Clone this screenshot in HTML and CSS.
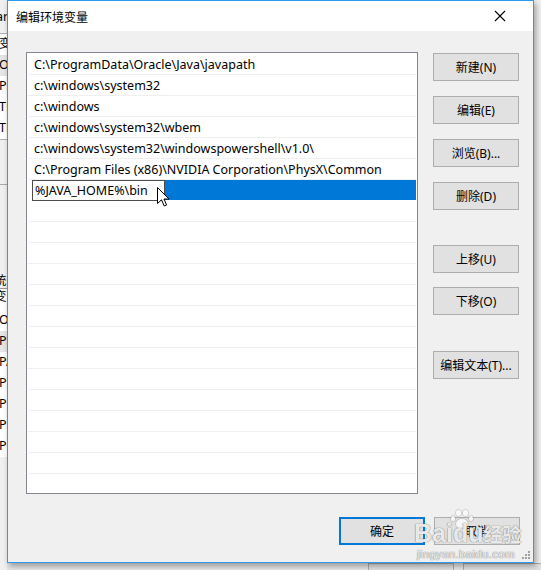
FILE: index.html
```html
<!DOCTYPE html>
<html lang="zh-CN">
<head>
<meta charset="utf-8">
<title>编辑环境变量</title>
<link rel="stylesheet" href="styles.css">
</head>
<body>
<div class="desktop">
  <div class="bg-left">
    <div class="bl-head">ar</div>
    <div class="bl-list">
      <div class="bl-row">变</div>
      <div class="bl-row sel">O</div>
      <div class="bl-row">Pa</div>
      <div class="bl-row">TE</div>
      <div class="bl-row">TM</div>
    </div>
    <div class="bl-gap"><div class="bl-gap-line"></div></div>
    <div class="bl-head2">统</div>
    <div class="bl-colhead">变</div>
    <div class="bl-list two">
      <div class="bl-row">O</div>
      <div class="bl-row sel">Pa</div>
      <div class="bl-row">PA</div>
      <div class="bl-row">PF</div>
      <div class="bl-row">PF</div>
      <div class="bl-row">PF</div>
      <div class="bl-row">PF</div>
    </div>
  </div>
  <div class="bg-right">
    <div class="br-a"></div>
    <div class="br-b"></div>
    <div class="br-c"></div>
    <div class="br-d"></div>
    <div class="br-e"></div>
    <div class="br-f"></div>
    <div class="br-g"></div>
    <div class="br-h"></div>
  </div>
  <div class="bg-bottom">
    <div class="bb-btn one"></div>
    <div class="bb-btn two"></div>
  </div>
</div>

<div class="dialog">
  <div class="titlebar">
    <span class="title">编辑环境变量</span>
    <svg class="close" width="12" height="12" viewBox="0 0 12 12"><path d="M1 1 L11 11 M11 1 L1 11" stroke="#000" stroke-width="1.1" fill="none"/></svg>
  </div>
  <div class="content">
    <div class="main">
      <div class="listbox">
        <div class="row"><span>C:\ProgramData\Oracle\Java\javapath</span></div>
        <div class="row"><span>c:\windows\system32</span></div>
        <div class="row"><span>c:\windows</span></div>
        <div class="row"><span>c:\windows\system32\wbem</span></div>
        <div class="row"><span>c:\windows\system32\windowspowershell\v1.0\</span></div>
        <div class="row"><span>C:\Program Files (x86)\NVIDIA Corporation\PhysX\Common</span></div>
        <div class="row editing"><span class="editbox">%JAVA_HOME%\bin</span><span class="selfill"></span></div>
        <div class="row"></div>
        <div class="row"></div>
        <div class="row"></div>
        <div class="row"></div>
        <div class="row"></div>
        <div class="row"></div>
        <div class="row"></div>
        <div class="row"></div>
        <div class="row"></div>
        <div class="row"></div>
        <div class="row"></div>
        <div class="row"></div>
        <div class="row"></div>
        <div class="row"></div>
      </div>
      <div class="buttons">
        <div class="btn b1">新建(N)</div>
        <div class="btn b2">编辑(E)</div>
        <div class="btn b3">浏览(B)...</div>
        <div class="btn b4">删除(D)</div>
        <div class="btn b5">上移(U)</div>
        <div class="btn b6">下移(O)</div>
        <div class="btn b7">编辑文本(T)...</div>
      </div>
    </div>
    <div class="footer">
      <div class="btn ok">确定</div>
      <div class="btn">取消</div>
    </div>
  </div>
  <div class="grip">
    <i></i><i></i><i></i><i></i><i></i><i></i>
  </div>
</div>

<div class="watermark">
  <div class="paw">
    <span class="toe t1"></span><span class="toe t2"></span><span class="toe t3"></span><span class="toe t4"></span><span class="pad"></span>
  </div>
  <div class="wm-main">Baidu<span class="wm-cn">经验</span></div>
  <div class="wm-url">jingyan.baidu.com</div>
</div>

<svg class="cursor" width="13" height="21" viewBox="0 0 13 21">
  <path d="M0.5 0.5 L0.5 16.5 L4.5 12.8 L7.2 19 L9.6 18 L7 12 L12 12 Z" fill="#fff" stroke="#000" stroke-width="1" stroke-linejoin="miter"/>
</svg>
</body>
</html>
```

FILE: styles.css
```css
* { box-sizing: border-box; }
html, body { margin: 0; padding: 0; }
body {
  width: 541px;
  height: 570px;
  overflow: hidden;
  position: relative;
  background: #f0f0f0;
  font-family: "Noto Sans", "Noto Sans CJK SC", sans-serif;
  font-size: 12px;
  color: #000;
}

/* ---------- backdrop window ---------- */
.desktop {
  width: 541px;
  height: 570px;
  display: grid;
  grid-template-columns: 7px 1fr 7px;
  grid-template-rows: 563px 7px;
}
.bg-left {
  grid-column: 1;
  grid-row: 1 / 3;
  overflow: hidden;
  background: #f0f0f0;
  font-family: "Noto Sans", "Noto Sans CJK SC", sans-serif;
  font-size: 12.5px;
  white-space: nowrap;
}
.bl-head { height: 33px; padding-top: 8px; line-height: 18px; margin-left: -4px; }
.bl-list { background: #fff; border-top: 1px solid #b0b0b0; }
.bl-list.two { border-top: none; }
.bl-row { height: 21px; line-height: 20px; margin-left: -1px; }
.bl-row.sel { background: #e5e5e5; }
.bl-gap { height: 110px; background: #f0f0f0; border-top: 1px solid #b0b0b0; padding-top: 44px; }
.bl-gap-line { border-top: 1px solid #a8a8a8; }
.bl-head2 { height: 40px; line-height: 18px; padding-top: 23px; margin-left: -6px; border-bottom: 1px solid #9a9a9a; }
.bl-colhead { height: 21px; line-height: 16px; margin-left: -6px; background: #fff; }
.bg-right {
  grid-column: 3;
  grid-row: 1 / 3;
  background: #e8e8e8;
  display: flex;
  flex-direction: column;
}
.br-a { height: 33px; border-bottom: 1px solid #aaa; background: #f0f0f0; }
.br-b { height: 161px; border-bottom: 1px solid #aaa; background: #e6e6e6; }
.br-c { height: 15px; border-bottom: 1px solid #aaa; background: #e6e6e6; }
.br-d { height: 25px; border-bottom: 1px solid #aaa; background: #e6e6e6; }
.br-e { height: 50px; border-bottom: 1px solid #aaa; background: #e6e6e6; }
.br-f { height: 50px; background: #e6e6e6; }
.br-g { height: 52px; background: #c8c8c8; }
.br-h { flex: 1; background: #e6e6e6; }
.bg-bottom {
  grid-column: 2;
  grid-row: 2;
  display: flex;
  background: #e6e6e6;
}
.bb-btn { height: 7px; border: 1px solid #adadad; border-bottom: none; background: #e1e1e1; }
.bb-btn.one { margin-left: 361px; width: 86px; }
.bb-btn.two { margin-left: 9px; width: 86px; }

/* ---------- dialog ---------- */
.dialog {
  position: absolute;
  left: 7px;
  top: 0;
  width: 527px;
  height: 563px;
  border: 1px solid #2b9af3;
  background: #f0f0f0;
  box-shadow: 2px 3px 6px rgba(0,0,0,0.35);
  display: flex;
  flex-direction: column;
}
.titlebar {
  height: 30px;
  background: #fff;
  display: flex;
  align-items: center;
  justify-content: space-between;
  padding: 0 27px 0 8px;
}
.title {
  font-family: "Noto Sans CJK SC", sans-serif;
  font-size: 12px;
  padding-top: 1px;
}
.close { display: block; }

.content {
  flex: 1;
  padding: 21px 13px 0 18px;
  display: flex;
  flex-direction: column;
}
.main { display: flex; gap: 15px; }
.listbox {
  width: 392px;
  height: 442px;
  border: 1px solid #828790;
  background: #fff;
  overflow: hidden;
  padding: 1px 1px 0 1px;
}
.row {
  height: 21px;
  border-bottom: 1px solid #efefef;
  display: flex;
  align-items: center;
  padding-left: 6px;
  padding-top: 1px;
  white-space: nowrap;
  font-size: 12.5px;
}
.row span { line-height: 20px; }
.row.editing {
  padding-left: 4px;
  padding-top: 0;
  border-bottom: none;
  align-items: stretch;
}
.editbox {
  width: 133px;
  height: 21px;
  border: 1px solid #4c4c4c;
  background: #fff;
  padding-left: 2px;
  line-height: 19px !important;
}
.selfill { flex: 1; background: #0078d7; height: 20px; }

.buttons {
  width: 86px;
  display: flex;
  flex-direction: column;
  padding-top: 1px;
}
.btn {
  width: 86px;
  height: 28px;
  border: 1px solid #adadad;
  background: #e1e1e1;
  display: flex;
  align-items: center;
  justify-content: center;
  font-family: "Noto Sans", "Noto Sans CJK SC", sans-serif;
  font-size: 12px;
  color: #000;
}
.buttons .btn + .btn { margin-top: 15px; }
.buttons .b5 { margin-top: 35px !important; }
.buttons .b6 { margin-top: 14px !important; }
.buttons .b7 { margin-top: 36px !important; }

.footer {
  display: flex;
  justify-content: flex-end;
  gap: 9px;
  margin-top: 23px;
}
.btn.ok { border: 2px solid #0078d7; }

.grip {
  position: absolute;
  right: 3px;
  bottom: 3px;
  width: 9px;
  height: 9px;
}
.grip i {
  position: absolute;
  width: 2px;
  height: 2px;
  background: #a0a0a0;
}
.grip i:nth-child(1) { right: 0; bottom: 0; }
.grip i:nth-child(2) { right: 3px; bottom: 0; }
.grip i:nth-child(3) { right: 6px; bottom: 0; }
.grip i:nth-child(4) { right: 0; bottom: 3px; }
.grip i:nth-child(5) { right: 3px; bottom: 3px; }
.grip i:nth-child(6) { right: 0; bottom: 6px; }

/* ---------- watermark (overlay) ---------- */
.watermark {
  position: absolute;
  left: 414px;
  top: 503px;
  width: 110px;
  height: 58px;
  pointer-events: none;
  color: rgba(250,250,250,0.9);
  text-shadow: 0 0 1px rgba(100,100,100,0.7), 0 0 1px rgba(100,100,100,0.7);
}
.paw { position: absolute; left: 37px; top: 7px; width: 22px; height: 19px; }
.toe, .pad {
  position: absolute;
  background: rgba(250,250,250,0.9);
  border-radius: 50%;
  box-shadow: 0 0 1px 0.5px rgba(110,110,110,0.5);
}
.t1 { left: 0; top: 6px; width: 4px; height: 5px; }
.t2 { left: 5px; top: 0; width: 5px; height: 6px; }
.t3 { left: 12px; top: 0; width: 5px; height: 6px; }
.t4 { left: 18px; top: 6px; width: 4px; height: 5px; }
.pad { left: 5px; top: 9px; width: 12px; height: 10px; }
.wm-main {
  position: absolute;
  left: 0;
  top: 16px;
  font-family: "Liberation Sans", "Noto Sans CJK SC", sans-serif;
  font-size: 25px;
  font-weight: bold;
  line-height: 28px;
  white-space: nowrap;
}
.wm-cn { font-size: 19px; margin-left: 0; font-weight: bold; font-family: "Noto Sans CJK SC", sans-serif; }
.wm-url {
  position: absolute;
  left: 3px;
  top: 44px;
  font-family: "Liberation Sans", sans-serif;
  font-size: 11.5px;
  line-height: 14px;
  letter-spacing: 0.3px;
  white-space: nowrap;
}

.cursor {
  position: absolute;
  left: 157px;
  top: 187px;
}
```
